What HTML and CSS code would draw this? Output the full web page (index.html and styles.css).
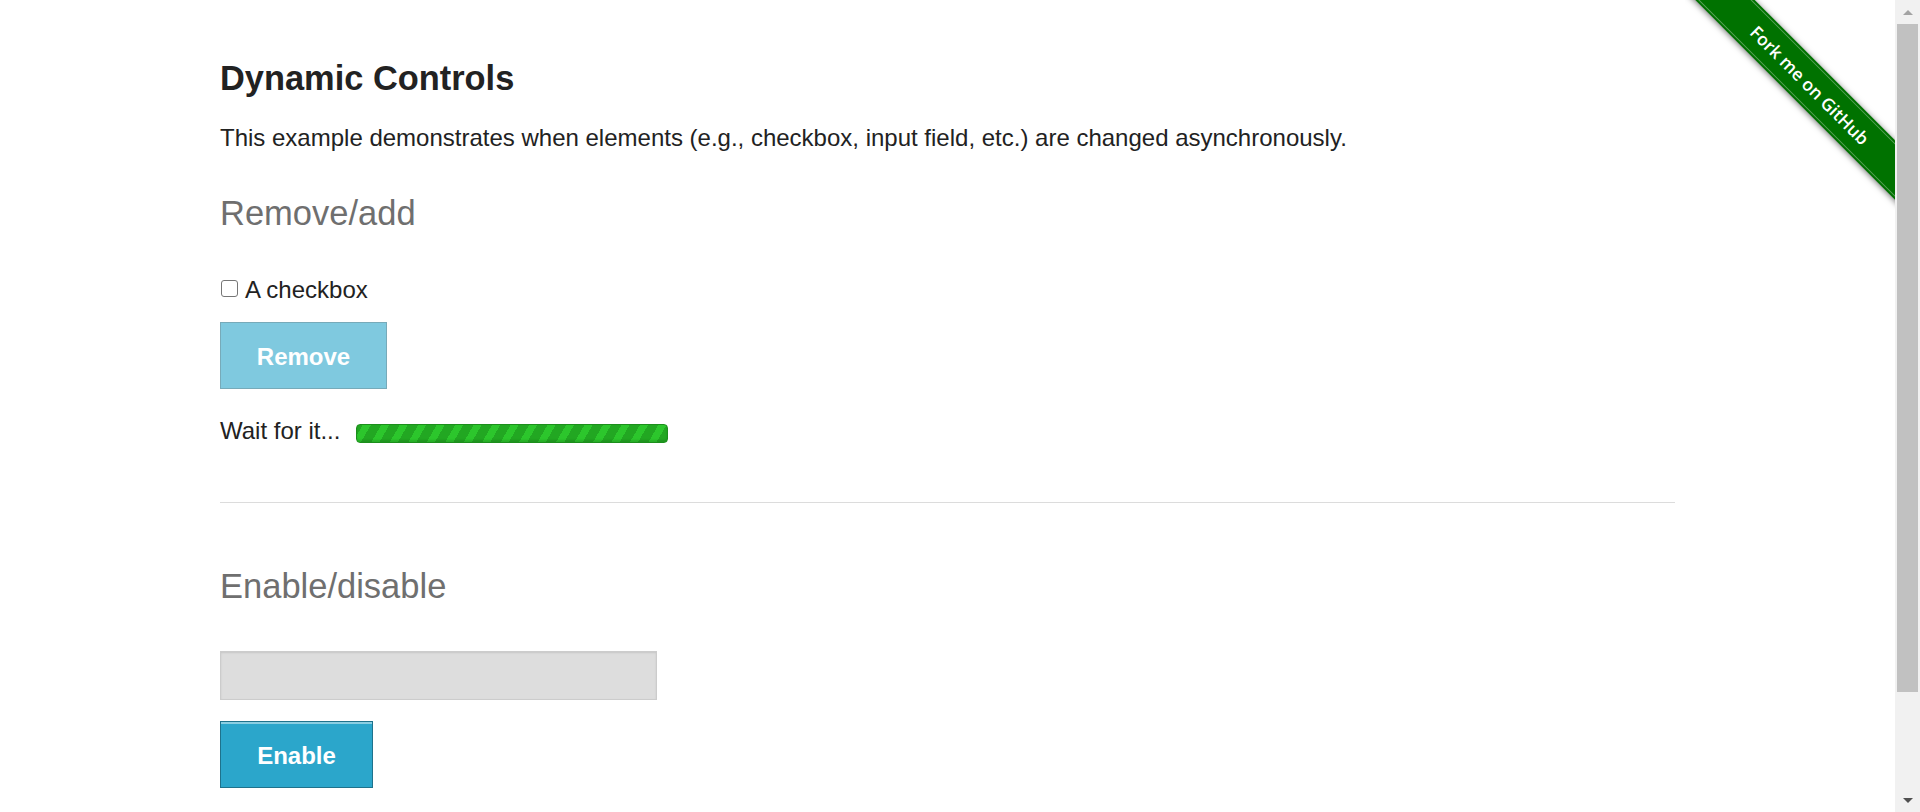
FILE: index.html
```html
<!DOCTYPE html>
<html lang="en">
<head>
<meta charset="utf-8">
<title>The Internet</title>
<link rel="stylesheet" href="styles.css">
</head>
<body>
<div class="page">
  <div class="ribbon-wrap">
    <a class="ribbon" href="#">Fork me on GitHub</a>
  </div>
  <div class="container">
    <h3 class="title">Dynamic Controls</h3>
    <p class="intro">This example demonstrates when elements (e.g., checkbox, input field, etc.) are changed asynchronously.</p>

    <h4 class="subtitle">Remove/add</h4>
    <div class="check-row">
      <input type="checkbox" class="check" id="cb">
      <label for="cb" class="check-label">A checkbox</label>
    </div>
    <button class="btn btn-disabled" type="button">Remove</button>
    <div class="wait-row">
      <span class="wait-text">Wait for it...</span>
      <span class="loader"></span>
    </div>

    <hr class="divider">

    <h4 class="subtitle subtitle-2">Enable/disable</h4>
    <input type="text" class="text-input" disabled>
    <button class="btn btn-enable" type="button">Enable</button>
  </div>
</div>
<div class="scrollbar">
  <div class="sb-btn"><span class="arrow-up"></span></div>
  <div class="sb-thumb"></div>
  <div class="sb-space"></div>
  <div class="sb-btn"><span class="arrow-down"></span></div>
</div>
</body>
</html>
```

FILE: styles.css
```css
html {
  overflow: hidden;
}
body {
  margin: 0;
  display: flex;
  height: 812px;
  background: #fff;
  font-family: "Liberation Sans", Arial, Helvetica, sans-serif;
  color: #222;
}
.page {
  flex: 1;
  position: relative;
  min-width: 0;
}
.container {
  width: 1455px;
  margin: 0 auto;
  padding-top: 60px;
}
.title {
  margin: 0 0 26px;
  font-size: 34.4px;
  line-height: 37px;
  font-weight: bold;
  color: #222;
}
.intro {
  margin: 0;
  font-size: 24px;
  line-height: 30px;
}
.subtitle {
  margin: 42px 0 0;
  font-size: 34.5px;
  line-height: 37px;
  font-weight: normal;
  color: #6f6f6f;
}
.check-row {
  margin-top: 43px;
  display: flex;
  align-items: center;
  height: 30px;
  font-size: 24px;
  line-height: 30px;
}
.check {
  appearance: none;
  -webkit-appearance: none;
  margin: 0 7px 0 1px;
  width: 17px;
  height: 17px;
  border: 1.5px solid #767676;
  border-radius: 3px;
  background: #fff;
  box-sizing: border-box;
  position: relative;
  top: -2px;
}
.check-label {
  color: #222;
}
.btn {
  display: block;
  font-family: inherit;
  font-size: 24px;
  font-weight: bold;
  color: #fff;
  background: #2ba6cb;
  border: 1px solid #1e728c;
  box-shadow: inset 0 2px 0 rgba(255, 255, 255, 0.45);
  padding: 3px 0 0;
  cursor: pointer;
}
.btn-disabled {
  margin-top: 17px;
  width: 167px;
  height: 67px;
  opacity: 0.6;
  box-shadow: none;
}
.wait-row {
  margin-top: 27px;
  display: flex;
  align-items: flex-start;
  font-size: 24px;
  line-height: 30px;
}
.loader {
  margin: 8px 0 0 16px;
  width: 312px;
  height: 19px;
  box-sizing: border-box;
  border: 1px solid #1c8f1c;
  border-radius: 4px;
  background: repeating-linear-gradient(
    -60deg,
    #22a722 0px,
    #22a722 9px,
    #2cc62c 9px,
    #2cc62c 16px
  );
  box-shadow: inset 0 -2px 2px rgba(0, 0, 0, 0.12);
}
.divider {
  margin: 56px 0 0;
  border: 0;
  border-top: 1px solid #dcdcdc;
  height: 0;
}
.subtitle-2 {
  margin-top: 65px;
}
.text-input {
  display: block;
  margin-top: 46px;
  width: 437px;
  height: 49px;
  box-sizing: border-box;
  background: #ddd;
  border: 1px solid #ccc;
  box-shadow: inset 0 1px 2px rgba(0, 0, 0, 0.1);
  font-size: 24px;
}
.btn-enable {
  margin-top: 21px;
  width: 153px;
  height: 67px;
}

/* Fork me ribbon */
.ribbon-wrap {
  position: absolute;
  top: 0;
  right: 0;
  width: 210px;
  height: 210px;
  overflow: hidden;
}
.ribbon {
  position: absolute;
  left: -25px;
  top: 64px;
  width: 300px;
  height: 42px;
  transform: rotate(45deg);
  background: #007200;
  box-shadow: 0 1px 6px rgba(0, 0, 0, 0.55);
  display: flex;
  align-items: center;
  justify-content: center;
  color: #fff;
  text-decoration: none;
  font-family: "Open Sans", "DejaVu Sans", sans-serif;
  font-weight: 600;
  font-size: 17.5px;
}
.ribbon::before {
  content: "";
  position: absolute;
  left: 0;
  right: 0;
  top: 2px;
  bottom: 2px;
  border-top: 1px solid rgba(255, 255, 255, 0.35);
  border-bottom: 1px solid rgba(255, 255, 255, 0.35);
}

/* Scrollbar */
.scrollbar {
  width: 25px;
  flex: none;
  height: 812px;
  background: #f1f1f1;
  display: flex;
  flex-direction: column;
  align-items: center;
}
.sb-btn {
  height: 24px;
  width: 25px;
  display: flex;
  align-items: center;
  justify-content: center;
  flex: none;
}
.sb-thumb {
  width: 21px;
  height: 668px;
  background: #c1c1c1;
  flex: none;
}
.sb-space {
  flex: 1;
}
.arrow-up {
  width: 0;
  height: 0;
  border-left: 5px solid transparent;
  border-right: 5px solid transparent;
  border-bottom: 5px solid #a3a3a3;
}
.arrow-down {
  width: 0;
  height: 0;
  border-left: 5px solid transparent;
  border-right: 5px solid transparent;
  border-top: 5px solid #505050;
}
```
